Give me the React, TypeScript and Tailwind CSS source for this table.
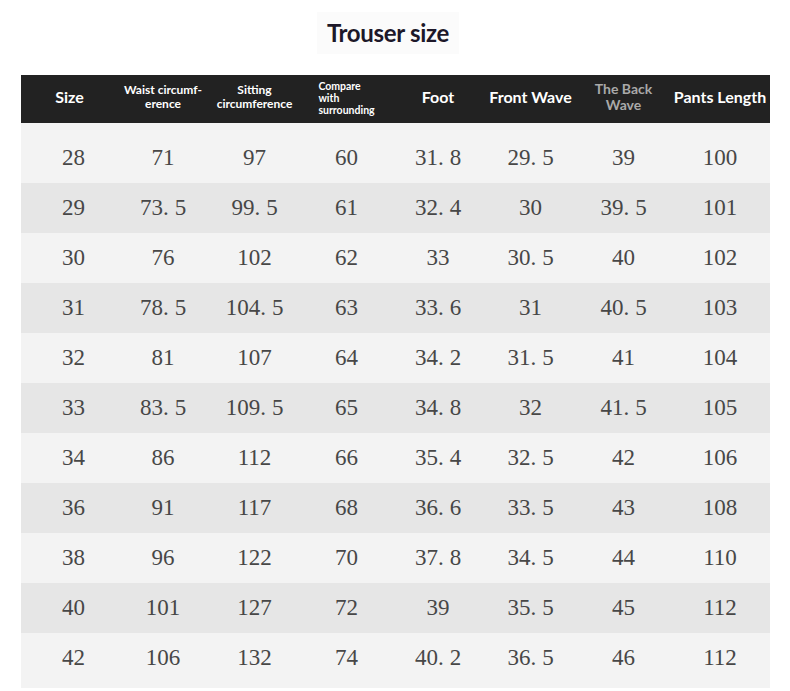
import React from 'react';

const ROWS: string[][] = [
  ['28', '71', '97', '60', '31.8', '29.5', '39', '100'],
  ['29', '73.5', '99.5', '61', '32.4', '30', '39.5', '101'],
  ['30', '76', '102', '62', '33', '30.5', '40', '102'],
  ['31', '78.5', '104.5', '63', '33.6', '31', '40.5', '103'],
  ['32', '81', '107', '64', '34.2', '31.5', '41', '104'],
  ['33', '83.5', '109.5', '65', '34.8', '32', '41.5', '105'],
  ['34', '86', '112', '66', '35.4', '32.5', '42', '106'],
  ['36', '91', '117', '68', '36.6', '33.5', '43', '108'],
  ['38', '96', '122', '70', '37.8', '34.5', '44', '110'],
  ['40', '101', '127', '72', '39', '35.5', '45', '112'],
  ['42', '106', '132', '74', '40.2', '36.5', '46', '112'],
];

const cols = 'grid grid-cols-[97px_90px_93px_91px_92px_93px_93px_100px]';

// wide gap after the decimal point, like the original font
const Num: React.FC<{ v: string }> = ({ v }) => {
  const [a, b] = v.split('.');
  if (b === undefined) return <>{v}</>;
  return (
    <>
      {a}.<span className="pl-[6px]">{b}</span>
    </>
  );
};

const App: React.FC = () => {
  return (
    <div className="w-[790px] h-[691px] bg-white font-['Lato','Liberation_Sans',sans-serif]">
      <div className="h-[65px] pr-[14px] flex items-center justify-center">
        <h1 className="px-[10px] py-[3px] bg-[#fbfbfb] text-[24px] font-bold text-[#1d1829] tracking-[-0.3px]">
          Trouser size
        </h1>
      </div>

      <div className="ml-[21px] mt-[10px] w-[749px]">
        <div className={`${cols} h-[48px] pb-[4px] bg-[#222222] text-white items-center text-center`}>
          <div className="text-[16px] font-bold">Size</div>
          <div className="text-[12px] font-bold leading-[14px]">
            Waist circumf-
            <br />
            erence
          </div>
          <div className="text-[12px] font-bold leading-[14px]">
            Sitting
            <br />
            circumference
          </div>
          <div className="flex justify-center pt-[2px]">
            <div className="text-left text-[10.5px] font-bold leading-[12px]">
              Compare
              <br />
              with
              <br />
              surrounding
            </div>
          </div>
          <div className="text-[16px] font-bold">Foot</div>
          <div className="text-[16px] font-bold">Front Wave</div>
          <div className="text-[14px] font-bold leading-[16px] text-[#a9a9a9]">
            The Back
            <br />
            Wave
          </div>
          <div className="text-[16px] font-bold">Pants Length</div>
        </div>

        <div className="bg-[#f3f3f3] pt-[10px] pb-[5px]">
          {ROWS.map((r, i) => (
            <div
              key={r[0]}
              className={`${cols} h-[50px] items-center text-center text-[23px] text-[#474747] font-['Liberation_Serif','DejaVu_Serif',serif] ${
                i % 2 === 1 ? 'bg-[#e6e6e6]' : 'bg-[#f3f3f3]'
              }`}
            >
              {r.map((v, j) => (
                <div key={j} className={j === 0 ? 'pl-[8px] pt-[1px]' : 'pt-[1px]'}>
                  <Num v={v} />
                </div>
              ))}
            </div>
          ))}
        </div>
      </div>
    </div>
  );
};

export default App;
